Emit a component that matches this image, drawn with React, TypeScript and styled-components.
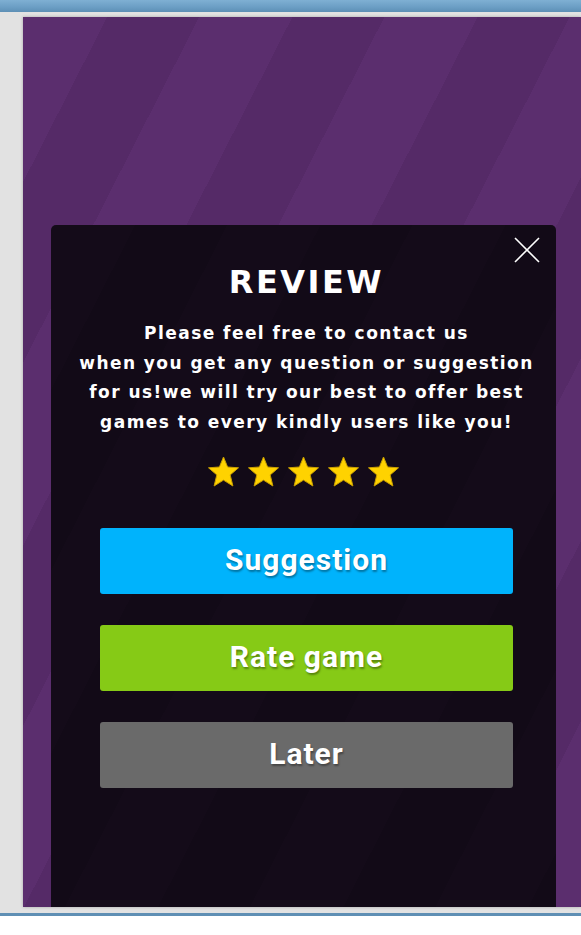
import React from "react";
import styled, { createGlobalStyle } from "styled-components";

const Global = createGlobalStyle`
  html, body { margin: 0; padding: 0; background: #ffffff; }
  body { font-family: "DejaVu Sans", "Liberation Sans", sans-serif; }
`;

const Page = styled.div`
  width: 581px;
  height: 935px;
  display: flex;
  flex-direction: column;
  background: #ffffff;
  overflow: hidden;
`;

const TopBar = styled.div`
  height: 12px;
  flex: none;
  background: linear-gradient(180deg, #7fb0d3 0%, #6b9ec4 60%, #5d8fb5 100%);
`;

const Frame = styled.div`
  flex: none;
  height: 901px;
  background: #e2e2e2;
  padding: 5px 0 6px 23px;
  box-sizing: border-box;
  display: flex;
`;

const Stage = styled.div`
  flex: 1;
  height: 890px;
  overflow: hidden;
  box-shadow: 0 0 3px rgba(0, 0, 0, 0.25);
  background: repeating-linear-gradient(
    117deg,
    #5b2e6e 0px,
    #5b2e6e 75px,
    #552a67 75px,
    #552a67 157px,
    #5b2e6e 157px,
    #5b2e6e 165px
  );
  padding: 208px 25px 0 28px;
  box-sizing: border-box;
`;

const BottomLine = styled.div`
  height: 3px;
  flex: none;
  background: #5f8fb4;
`;

const Modal = styled.div`
  position: relative;
  width: 505px;
  height: 720px;
  border-radius: 5px;
  background: repeating-linear-gradient(
    117deg,
    #140b19 0px,
    #140b19 75px,
    #120a17 75px,
    #120a17 157px,
    #140b19 157px,
    #140b19 165px
  );
  display: flex;
  flex-direction: column;
  align-items: center;
  box-sizing: border-box;
  padding: 40px 0 0 6px;
`;

const Close = styled.button`
  position: absolute;
  top: 12px;
  right: 16px;
  width: 26px;
  height: 26px;
  padding: 0;
  border: none;
  background: transparent;
  cursor: pointer;
  display: flex;
`;

const Title = styled.h1`
  margin: 0;
  color: #ffffff;
  font-family: "DejaVu Sans", sans-serif;
  font-weight: bold;
  font-size: 32px;
  line-height: 34px;
  letter-spacing: 2.5px;
`;

const Message = styled.p`
  margin: 20px 0 0;
  color: #ffffff;
  font-family: "DejaVu Sans", sans-serif;
  font-weight: bold;
  font-size: 17px;
  line-height: 29.6px;
  letter-spacing: 1.45px;
  text-align: center;
  white-space: pre;
`;

const Stars = styled.div`
  margin: 19px 0 0 -6px;
  display: flex;
  gap: 7px;
`;

const Buttons = styled.div`
  margin-top: 40px;
  width: 413px;
  display: flex;
  flex-direction: column;
  gap: 31px;
`;

const ActionButton = styled.button<{ $bg: string }>`
  height: 66px;
  width: 100%;
  border: none;
  border-radius: 3px;
  background: ${(p) => p.$bg};
  color: #ffffff;
  font-family: Roboto, "DejaVu Sans", sans-serif;
  font-weight: 700;
  font-size: 30px;
  letter-spacing: 1px;
  text-shadow: 1px 2px 2px rgba(0, 0, 0, 0.35);
  cursor: pointer;
  padding: 0 0 4px;
`;

const Star = () => (
  <svg width="33" height="32" viewBox="0 0 33 32">
    <polygon
      points="16.5,1 20.6,11 31.5,11.8 23.2,18.9 25.9,30 16.5,24.1 7.1,30 9.8,18.9 1.5,11.8 12.4,11"
      fill="#ffd200"
      stroke="#c99f00"
      strokeWidth="1"
      strokeLinejoin="round"
    />
  </svg>
);

const message = `Please feel free to contact us
when you get any question or suggestion
for us!we will try our best to offer best
games to every kindly users like you!`;

export default function App() {
  return (
    <Page>
      <Global />
      <TopBar />
      <Frame>
        <Stage>
          <Modal>
            <Close aria-label="close">
              <svg width="26" height="26" viewBox="0 0 26 26">
                <path d="M1 1 L25 25 M25 1 L1 25" stroke="#ffffff" strokeWidth="1.6" />
              </svg>
            </Close>
            <Title>REVIEW</Title>
            <Message>{message}</Message>
            <Stars>
              {[0, 1, 2, 3, 4].map((i) => (
                <Star key={i} />
              ))}
            </Stars>
            <Buttons>
              <ActionButton $bg="#00b3fc">Suggestion</ActionButton>
              <ActionButton $bg="#86ca16">Rate game</ActionButton>
              <ActionButton $bg="#6a6a6a">Later</ActionButton>
            </Buttons>
          </Modal>
        </Stage>
      </Frame>
      <BottomLine />
    </Page>
  );
}
